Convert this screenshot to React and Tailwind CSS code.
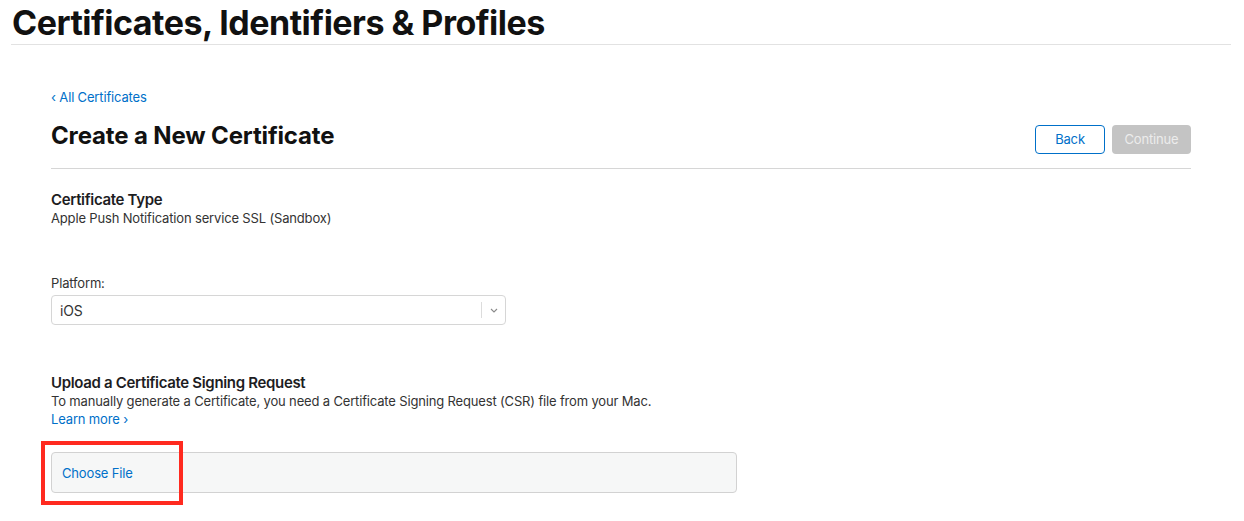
import React from 'react';

function ChevronDown() {
  return (
    <svg width="8" height="5" viewBox="0 0 8 5" fill="none">
      <path d="M1 1l3 3 3-3" stroke="#8a8a8a" strokeWidth="1.1" />
    </svg>
  );
}

export default function App() {
  return (
    <div className="min-h-screen bg-white text-[#1d1d1f]" style={{ fontFamily: 'Inter, "Liberation Sans", sans-serif' }}>
      {/* Page header */}
      <div className="ml-[11px] mr-[13px] h-[45px] border-b border-[#e2e2e2]">
        <h1 className="pl-[1px] pt-[2px] text-[34px] font-bold leading-[42px] tracking-[-0.015em] text-[#111]">
          Certificates, Identifiers &amp; Profiles
        </h1>
      </div>

      <div className="pl-[51px] pr-[53px] tracking-[-0.01em]">
        <a className="mt-[43px] block text-[13px] leading-[18px] text-[#0070c9]">‹ All Certificates</a>

        <div className="mt-[14px] flex h-[49px] items-start justify-between border-b border-[#d6d6d6]">
          <h2 className="pt-[1px] text-[24px] font-bold leading-[30px] tracking-[-0.006em] text-[#111]">Create a New Certificate</h2>
          <div className="mt-[5px] flex gap-[7px]">
            <button className="h-[29px] w-[70px] rounded-[4px] border border-[#0070c9] text-[13px] text-[#0070c9]">Back</button>
            <button className="h-[29px] w-[79px] rounded-[4px] bg-[#c4c4c4] text-[13px] text-[#ececec]">Continue</button>
          </div>
        </div>

        {/* Certificate type */}
        <div className="mt-[22px]">
          <div className="text-[15px] font-semibold leading-[18px] tracking-[-0.022em]">Certificate Type</div>
          <div className="text-[13px] leading-[18px] text-[#333]">Apple Push Notification service SSL (Sandbox)</div>
        </div>

        {/* Platform */}
        <div className="mt-[47px]">
          <div className="text-[13px] leading-[18px] text-[#333]">Platform:</div>
          <div className="mt-[3px] flex h-[30px] w-[455px] items-center rounded-[4px] border border-[#d6d6d6]">
            <span className="flex-1 pl-[8px] text-[14px] text-[#333]">iOS</span>
            <div className="h-[16px] w-px bg-[#dcdcdc]" />
            <div className="flex w-[23px] justify-center">
              <ChevronDown />
            </div>
          </div>
        </div>

        {/* Upload CSR */}
        <div className="mt-[49px]">
          <div className="text-[15px] font-semibold leading-[18px] tracking-[-0.022em]">Upload a Certificate Signing Request</div>
          <div className="text-[13px] leading-[18px] text-[#333]">
            To manually generate a Certificate, you need a Certificate Signing Request (CSR) file from your Mac.
          </div>
          <a className="block text-[13px] leading-[18px] text-[#0070c9]">Learn more ›</a>

          <div className="relative mt-[24px] flex h-[41px] w-[686px] items-center rounded-[4px] border border-[#d2d2d2] bg-[#f6f7f7]">
            <span className="pl-[10px] pt-[2px] text-[13px] text-[#0070c9]">Choose File</span>
            <div className="absolute left-[-11px] top-[-12px] h-[64px] w-[142px] border-4 border-[#ff2a1f]" />
          </div>
        </div>
      </div>
    </div>
  );
}
